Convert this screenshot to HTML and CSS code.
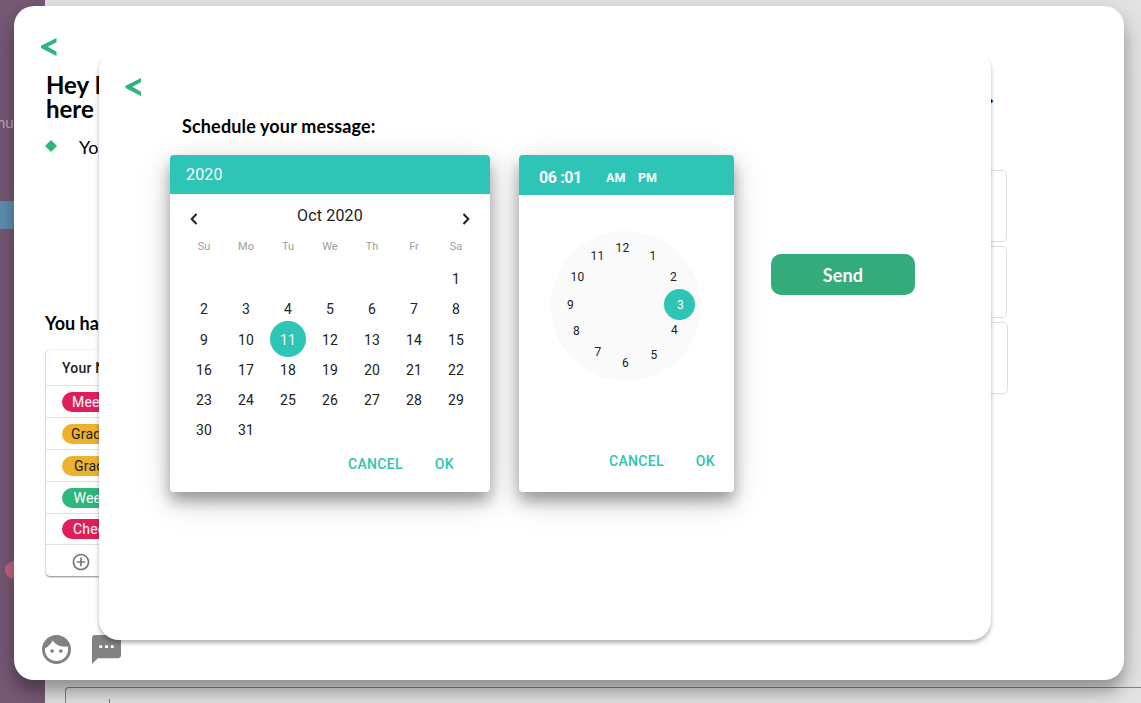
FILE: index.html
```html
<!DOCTYPE html>
<html lang="en">
<head>
<meta charset="utf-8">
<title>Schedule your message</title>
<link rel="stylesheet" href="styles.css">
</head>
<body>
<div class="app">
  <aside class="sidebar">
    <span class="side-label">nu</span>
    <div class="side-active"></div>
    <span class="side-badge"></span>
  </aside>
  <main class="channel">
    <hr class="unread-line">
    <div class="composer"><span class="caret"></span></div>
  </main>
</div>

<section class="sheet">
  <svg class="back" viewBox="0 0 17 18"><path d="M15.500 0V4.300L6.800 8.800L15.500 13.700V18L0 10V7.800Z"/></svg>
  <div class="sheet-columns">
    <div class="overview">
      <h1 class="greeting">Hey I<br>here</h1>
      <div class="tip"><svg class="diamond" viewBox="0 0 12 12"><path d="M6 0L12 6L6 12L0 6Z"/></svg><span>Yo</span></div>
      <h2 class="count">You ha</h2>
      <div class="table">
        <div class="table-head">Your N</div>
        <div class="row"><span class="chip pink">Mee</span></div>
        <div class="row"><span class="chip amber">Grad</span></div>
        <div class="row"><span class="chip amber inset">Grad</span></div>
        <div class="row"><span class="chip green">Wee</span></div>
        <div class="row short"><span class="chip pink">Chec</span></div>
        <div class="row add">
          <svg viewBox="0 0 24 24"><path d="M13 7h-2v4H7v2h4v4h2v-4h4v-2h-4V7zm-1-5C6.480 2 2 6.480 2 12s4.480 10 10 10 10-4.480 10-10S17.520 2 12 2zm0 18c-4.410 0-8-3.590-8-8s3.590-8 8-8 8 3.590 8 8-3.590 8-8 8z"/></svg>
        </div>
      </div>
      <div class="tools">
        <svg viewBox="2 2 20 20"><path d="M9 11.750c-.69 0-1.250.56-1.250 1.250s.56 1.250 1.250 1.250 1.250-.56 1.250-1.250-.56-1.250-1.250-1.250zm6 0c-.69 0-1.250.56-1.250 1.250s.56 1.250 1.250 1.250 1.250-.56 1.250-1.250-.56-1.250-1.250-1.250zM12 2C6.480 2 2 6.480 2 12s4.480 10 10 10 10-4.480 10-10S17.520 2 12 2zm0 18c-4.410 0-8-3.590-8-8 0-.29.02-.58.05-.86 2.360-1.050 4.230-2.980 5.210-5.370C11.070 8.330 14.050 10 17.420 10c.78 0 1.530-.09 2.250-.26.21.71.33 1.470.33 2.260 0 4.410-3.590 8-8 8z"/></svg>
        <svg viewBox="2 2 20 20"><path d="M20 2H4c-1.100 0-1.990.9-1.990 2L2 22l4-4h14c1.100 0 2-.9 2-2V4c0-1.100-.9-2-2-2zM9 11H7V9h2v2zm4 0h-2V9h2v2zm4 0h-2V9h2v2z"/></svg>
      </div>
    </div>
    <div class="side-cards">
      <div class="side-title">.</div>
      <div class="slot"></div>
      <div class="slot"></div>
      <div class="slot wide"></div>
    </div>
  </div>
</section>

<section class="dialog">
  <svg class="back" viewBox="0 0 17 18"><path d="M16 0V4.300L7.300 8.800L16 13.700V18L0.500 10V7.800Z"/></svg>
  <h2 class="dialog-title">Schedule your message:</h2>
  <div class="pickers">
    <div class="picker calendar">
      <header class="year">2020</header>
      <div class="month">
        <svg viewBox="0 0 10 14"><path d="M7.500 2L2.700 7L7.500 12"/></svg>
        <span>Oct 2020</span>
        <svg viewBox="0 0 10 14"><path d="M2.500 2L7.300 7L2.500 12"/></svg>
      </div>
      <div class="weekdays"><span>Su</span><span>Mo</span><span>Tu</span><span>We</span><span>Th</span><span>Fr</span><span>Sa</span></div>
      <div class="days">
        <span class="first">1</span>
        <span>2</span><span>3</span><span>4</span><span>5</span><span>6</span><span>7</span><span>8</span>
        <span>9</span><span>10</span><span class="selected">11</span><span>12</span><span>13</span><span>14</span><span>15</span>
        <span>16</span><span>17</span><span>18</span><span>19</span><span>20</span><span>21</span><span>22</span>
        <span>23</span><span>24</span><span>25</span><span>26</span><span>27</span><span>28</span><span>29</span>
        <span>30</span><span>31</span>
      </div>
      <footer class="actions"><span>CANCEL</span><span>OK</span></footer>
    </div>
    <div class="picker clock">
      <header class="time"><b>06 :01</b><span>AM</span><span>PM</span></header>
      <div class="dial">
        <i class="h12">12</i><i class="h1">1</i><i class="h2">2</i><i class="h3"><em>3</em></i><i class="h4">4</i><i class="h5">5</i>
        <i class="h6">6</i><i class="h7">7</i><i class="h8">8</i><i class="h9">9</i><i class="h10">10</i><i class="h11">11</i>
      </div>
      <footer class="actions"><span>CANCEL</span><span>OK</span></footer>
    </div>
    <button class="send">Send</button>
  </div>
</section>
</body>
</html>
```

FILE: styles.css
```css
* { box-sizing: border-box; }
body {
  margin: 0;
  width: 1141px;
  height: 703px;
  overflow: hidden;
  position: relative;
  font-family: Roboto, sans-serif;
  color: #212121;
}
h1, h2 { margin: 0; font-family: Lato, sans-serif; color: #000; }
svg { display: block; flex: none; }

/* app behind the sheets */
.app { display: flex; width: 1141px; height: 703px; }
.sidebar { width: 45px; background: #775a76; display: flex; flex-direction: column; }
.side-label { margin: 113px 0 0 -3px; height: 20px; font: 15px/19px Lato, sans-serif; color: #b9a9b8; }
.side-active { margin-top: 68px; height: 28px; background: #5f91b4; }
.side-badge { margin: 332px 0 0 5px; width: 40px; height: 18px; border-radius: 9px; background: #cd6480; }
.channel { flex: 1; background: #e4e4e4; display: flex; flex-direction: column; }
.unread-line { width: 100%; height: 1px; margin: 428px 0 0; border: 0; background: #db4c78; }
.composer { margin: 259px 0 0 20px; height: 40px; flex: none; border: 1px solid #858585; border-right: 0; border-radius: 4px 0 0 0; padding: 11px 0 0 43px; }
.caret { display: block; width: 1px; height: 12px; background: #777; }

/* outer sheet */
.sheet {
  position: absolute;
  left: 14px;
  top: 6px;
  width: 1110px;
  height: 674px;
  padding: 32px 0 0 27px;
  border-radius: 20px;
  background: #fff;
  box-shadow: 0 9px 46px rgba(0,0,0,.12), 0 11px 15px rgba(0,0,0,.3);
}
.back { width: 17px; height: 18px; fill: #2fb47c; }
.sheet-columns { display: flex; justify-content: space-between; padding: 17px 116px 0 4px; }
.overview { width: 110px; }
.greeting { font-size: 24px; line-height: 24px; white-space: nowrap; padding-left: 1px; }
.tip { display: flex; align-items: center; gap: 22px; height: 24px; margin-top: 14px; font: 18px/24px Lato, sans-serif; color: #000; }
.diamond { width: 12px; height: 12px; margin-top: -2px; fill: #2fb47c; }
.count { margin-top: 152px; font-size: 18px; line-height: 24px; }
.table { margin: 15px 0 0 1px; width: 120px; height: 226px; border-radius: 4px; box-shadow: 0 1px 2px rgba(0,0,0,.45), 0 0 1px rgba(0,0,0,.3); background: #fff; }
.table-head { height: 36px; padding-left: 16px; font-weight: 500; font-size: 14px; line-height: 36px; letter-spacing: .2px; border-bottom: 1px solid #e0e0e0; }
.row { height: 32px; padding: 6px 0 0 16px; border-bottom: 1px solid #e0e0e0; }
.row.short { height: 31px; padding-top: 5px; }
.row.add { border: 0; padding: 7px 0 0 25px; }
.row.add svg { width: 20px; height: 20px; fill: #757575; }
.chip { display: block; width: 90px; height: 20px; border-radius: 10px; font-size: 14px; line-height: 20px; letter-spacing: .2px; }
.pink { background: #e01e5a; color: #fff; padding-left: 10px; }
.row.short .pink { padding-left: 11px; }
.amber { background: #ecb22e; padding-left: 9px; }
.amber.inset { padding-left: 12px; }
.green { background: #2eb67d; color: #fff; padding-left: 11.500px; }
.tools { display: flex; gap: 21px; margin: 59px 0 0 -3px; }
.tools svg { width: 29px; height: 29px; fill: #828282; }
.side-cards { width: 100px; display: flex; flex-direction: column; gap: 4px; }
.side-title { height: 82px; padding: 9px 0 0 80px; margin-bottom: 11px; font: bold 24px/24px Lato, sans-serif; color: #000; }
.slot { width: 99px; height: 72px; border: 1px solid #dedede; border-radius: 5px; }
.slot.wide { width: 100px; }

/* scheduling dialog */
.dialog {
  position: absolute;
  left: 99px;
  top: 50px;
  width: 892px;
  height: 590px;
  padding: 28px 0 0 26px;
  border-radius: 20px;
  background: #fff;
  box-shadow: 0 3px 4px rgba(0,0,0,.3);
  clip-path: inset(8px -10px -10px -10px);
}
.dialog-title { margin: 17px 0 0 57px; font-size: 18px; line-height: 26px; letter-spacing: .15px; }
.pickers { display: flex; align-items: flex-start; margin: 16px 0 0 45px; }
.picker { border-radius: 4px; height: 337px; display: flex; flex-direction: column; background: #fff; box-shadow: 0 9px 36px rgba(0,0,0,.14), 0 9px 15px rgba(0,0,0,.34); }
.picker header { background: #2ec4b6; color: #fff; border-radius: 4px 4px 0 0; flex: none; }
.calendar { width: 320px; }
.year { height: 39px; line-height: 39px; padding-left: 16px; font-size: 16px; letter-spacing: .15px; }
.month { display: flex; justify-content: space-between; height: 42px; padding: 0 19px; font-size: 16px; line-height: 43px; letter-spacing: .15px; }
.month svg { width: 10px; height: 14px; margin-top: 18px; fill: none; stroke: #212121; stroke-width: 2; }
.weekdays, .days { display: grid; grid-template-columns: repeat(7, 42px); padding-left: 13px; text-align: center; }
.weekdays { height: 28px; line-height: 22px; font-size: 11px; color: #9e9e9e; }
.days { grid-auto-rows: 30.3px; height: 182px; font-size: 14px; line-height: 31px; letter-spacing: .25px; }
.first { grid-column: 7; }
.selected { width: 36px; height: 36px; margin: -4px 3px; border-radius: 50%; background: #2ec4b6; color: #fff; line-height: 38px; }
.actions { display: flex; font-size: 14px; font-weight: 500; line-height: 20px; letter-spacing: .3px; color: #2ec4b6; }
.calendar .actions { gap: 32px; padding: 8px 0 0 178px; }
.clock { width: 215px; margin-left: 29px; }
.time { display: flex; align-items: center; height: 40px; padding: 5px 0 0 20px; font-size: 12.500px; font-weight: 700; }
.time b { width: 67px; font-size: 16px; font-weight: 700; letter-spacing: -.4px; }
.time span { width: 32px; }
.dial { position: relative; flex: none; width: 150px; height: 150px; margin: 36px 0 0 32px; border-radius: 50%; background: #fafafa; }
/* hour marks are placed around the dial by their centre */
.dial i { position: absolute; transform: translate(-50%, -50%); font-style: normal; font-size: 12px; line-height: 16px; letter-spacing: .2px; }
.dial em { font-style: normal; padding-left: 2px; }
.dial .h12 { left: 71.500px; top: 17px; }
.dial .h1 { left: 102px; top: 25px; }
.dial .h2 { left: 122.500px; top: 46px; }
.dial .h3 { left: 113px; top: 58px; transform: none; width: 31px; height: 31px; line-height: 32px; text-align: center; border-radius: 50%; background: #2ec4b6; color: #fff; }
.dial .h4 { left: 123.500px; top: 99px; }
.dial .h5 { left: 103px; top: 124px; }
.dial .h6 { left: 74.500px; top: 132px; }
.dial .h7 { left: 47px; top: 121px; }
.dial .h8 { left: 25.500px; top: 100px; }
.dial .h9 { left: 19.500px; top: 74px; }
.dial .h10 { left: 26.500px; top: 46px; }
.dial .h11 { left: 46.500px; top: 25px; }
.clock .actions { gap: 32px; padding: 70px 0 0 90px; }
.send { margin: 99px 0 0 37px; width: 144px; height: 41px; padding: 1px 0 0; border: 0; border-radius: 10px; background: #33ab7a; color: #fff; font: bold 18px Lato, sans-serif; letter-spacing: .15px; }
```
